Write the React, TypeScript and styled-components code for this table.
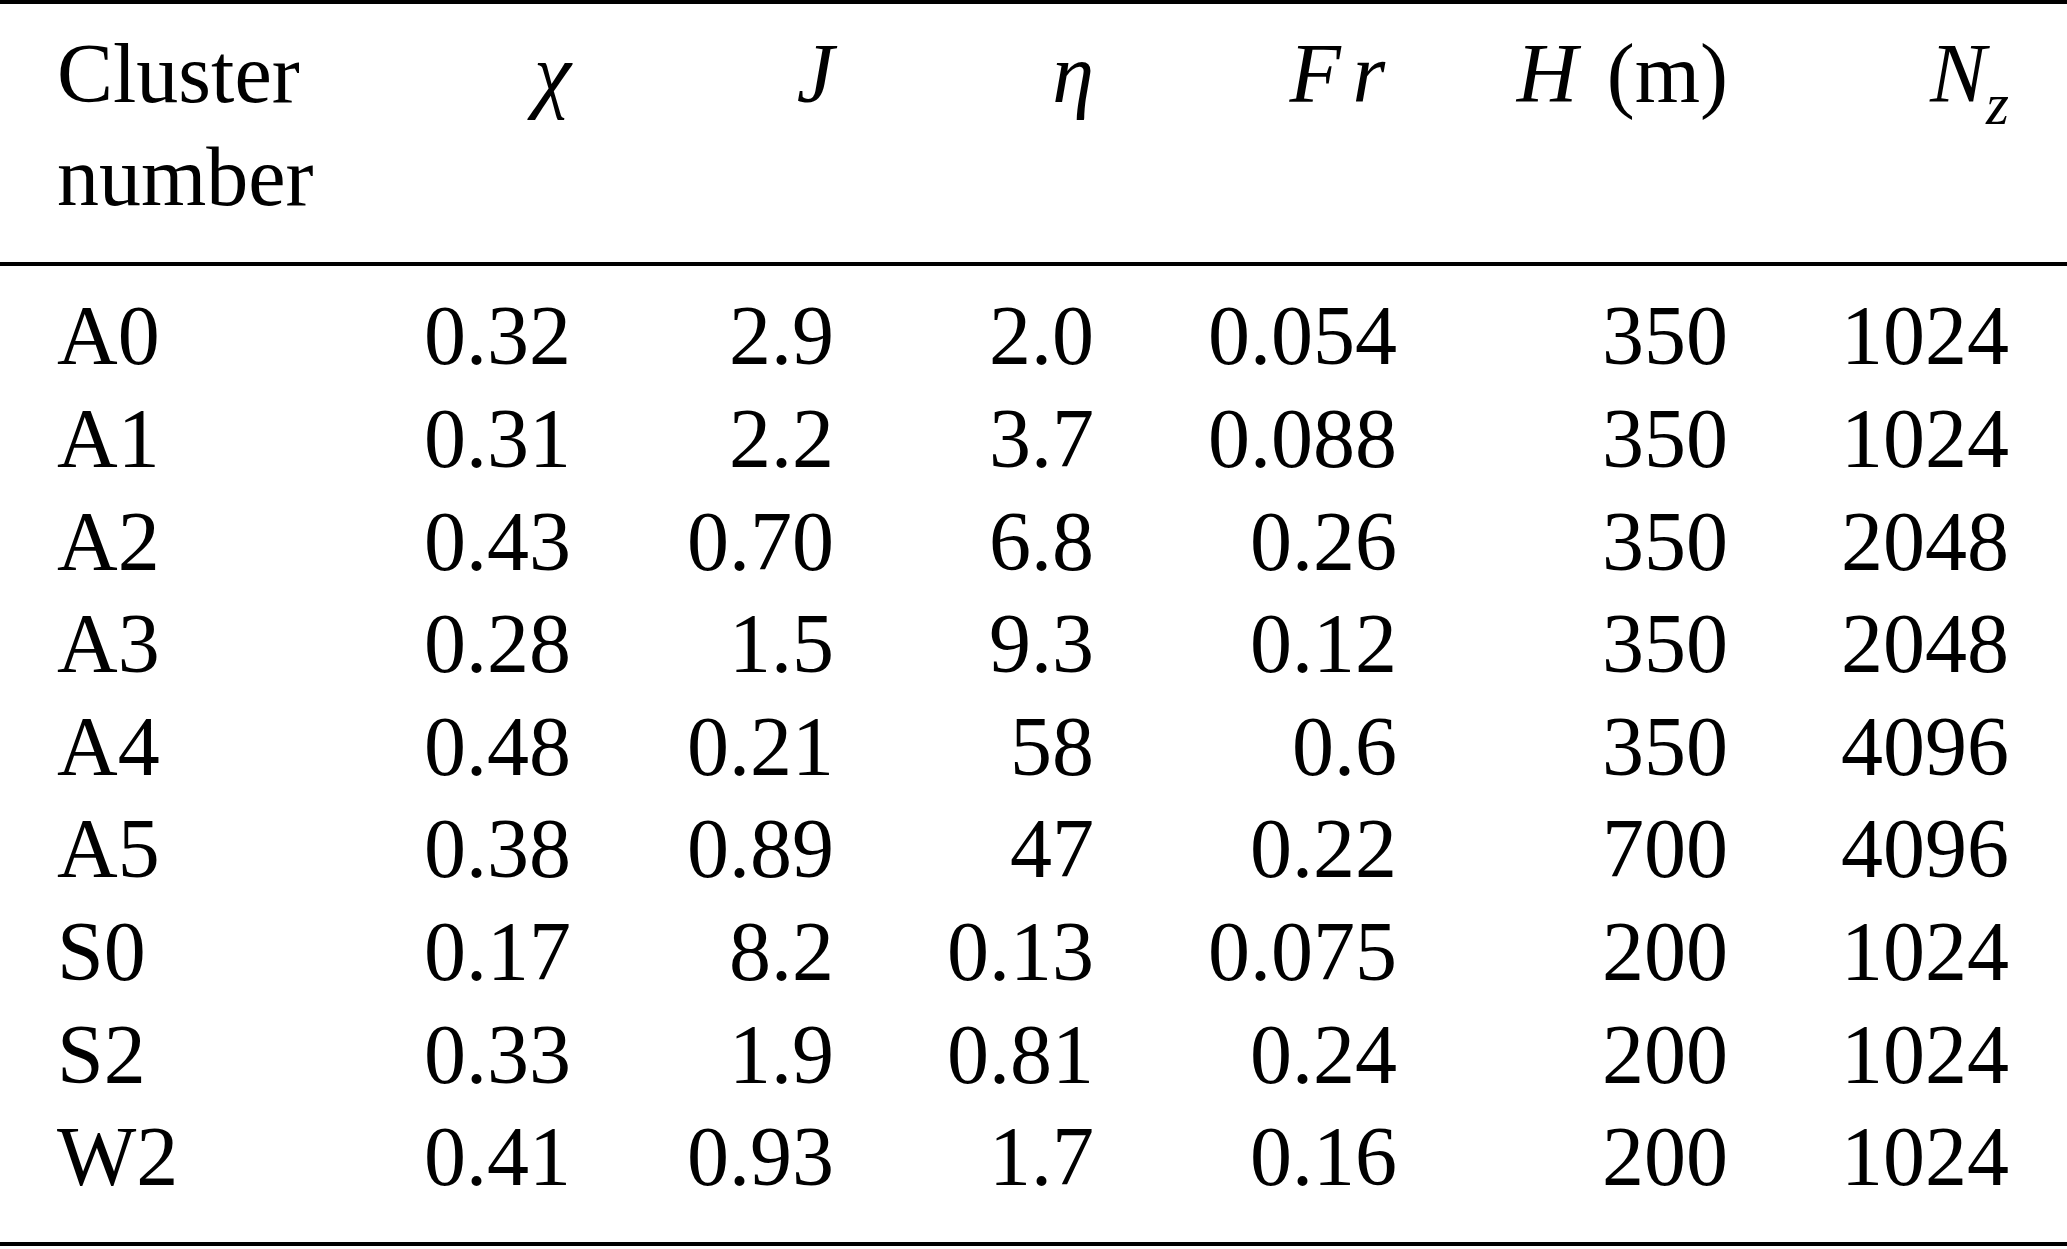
import React from 'react';
import styled, { createGlobalStyle } from 'styled-components';

type Row = {
    cluster: string;
    values: string[];
}

const rows: Array<Row> = [
    { cluster: 'A0', values: ['0.32', '2.9', '2.0', '0.054', '350', '1024'] },
    { cluster: 'A1', values: ['0.31', '2.2', '3.7', '0.088', '350', '1024'] },
    { cluster: 'A2', values: ['0.43', '0.70', '6.8', '0.26', '350', '2048'] },
    { cluster: 'A3', values: ['0.28', '1.5', '9.3', '0.12', '350', '2048'] },
    { cluster: 'A4', values: ['0.48', '0.21', '58', '0.6', '350', '4096'] },
    { cluster: 'A5', values: ['0.38', '0.89', '47', '0.22', '700', '4096'] },
    { cluster: 'S0', values: ['0.17', '8.2', '0.13', '0.075', '200', '1024'] },
    { cluster: 'S2', values: ['0.33', '1.9', '0.81', '0.24', '200', '1024'] },
    { cluster: 'W2', values: ['0.41', '0.93', '1.7', '0.16', '200', '1024'] },
];

const GlobalStyle = createGlobalStyle`
    html, body {
        margin: 0;
        padding: 0;
        background: #ffffff;
    }
`

export default function App() {
    return <>
        <GlobalStyle />
        <Sheet>
            <Head>
                <Cell>Cluster<br />number</Cell>
                <Cell $right><Math>χ</Math></Cell>
                <Cell $right><Math>J</Math></Cell>
                <Cell $right><Math>η</Math></Cell>
                <Cell $right><Math $spaced>Fr</Math></Cell>
                <Cell $right><Math $wide>H</Math>&nbsp;(m)</Cell>
                <Cell $right><Math>N</Math><Sub>z</Sub></Cell>
            </Head>
            <Body>
                {rows.map(row => <React.Fragment key={row.cluster}>
                    <Cell>{row.cluster}</Cell>
                    {row.values.map((v, i) => <Cell $right key={i}>{v}</Cell>)}
                </React.Fragment>)}
            </Body>
        </Sheet>
    </>
}

const Sheet = styled.div`
    width: 2067px;
    box-sizing: border-box;
    border-top: 4px solid #000;
    border-bottom: 4px solid #000;
    color: #000;
    font-family: "Liberation Serif", "Times New Roman", serif;
    font-size: 84px;
`

const Grid = styled.div`
    display: grid;
    grid-template-columns: 243px 271px 263px 260px 303px 331px 281px;
    align-items: start;
    line-height: 102.6px;
    padding-left: 57px;
`

const Head = styled(Grid)`
    padding-top: 19.4px;
    padding-bottom: 33.4px;
    border-bottom: 4px solid #000;
`

const Body = styled(Grid)`
    padding-top: 19.4px;
    padding-bottom: 33.2px;
`

const Cell = styled.div<{ $right?: boolean }>`
    text-align: ${props => props.$right ? 'right' : 'left'};
    white-space: nowrap;
`

const Math = styled.span<{ $spaced?: boolean; $wide?: boolean }>`
    font-style: italic;
    letter-spacing: ${props => props.$spaced ? '0.14em' : 'normal'};
    margin-right: ${props => props.$wide ? '0.1em' : '0'};
`

const Sub = styled.span`
    font-style: italic;
    font-size: 0.7em;
    line-height: 0;
    vertical-align: -0.38em;
`
